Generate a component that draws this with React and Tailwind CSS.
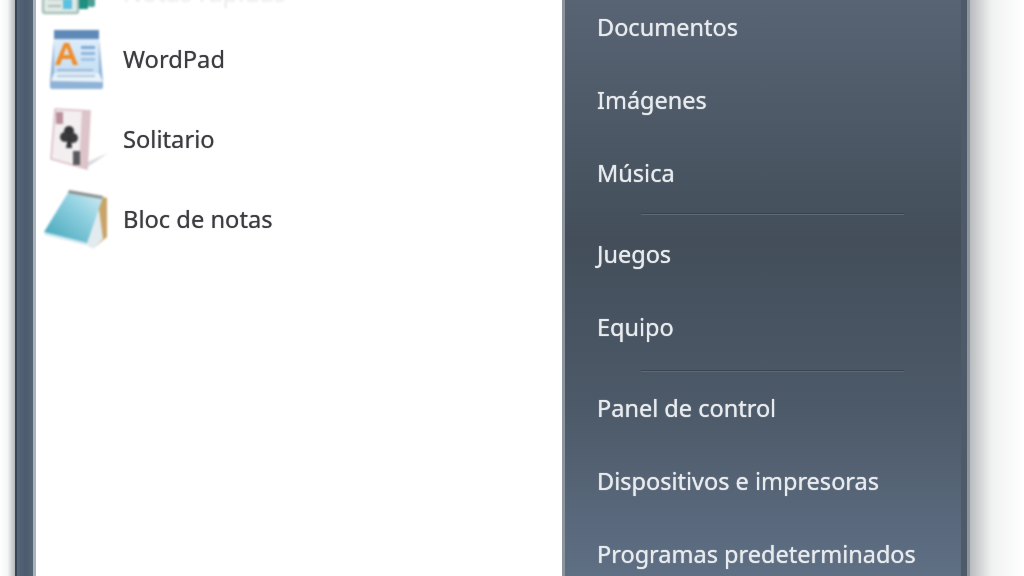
const FONT = "font-['Noto_Sans','Open_Sans',sans-serif]"

const places = [
  ['Documentos'], ['Imágenes'], ['Música'], 'sep',
  ['Juegos'], ['Equipo'], 'sep2',
  ['Panel de control'], ['Dispositivos e impresoras'], ['Programas predeterminados'],
]

function StickyIcon() {
  return (
    <svg width="64" height="60" viewBox="0 0 64 60" className="blur-[0.8px]">
      <rect x="5" y="2" width="35" height="50" rx="2" fill="#dfeae6" stroke="#a9bfb8" strokeWidth="2.5" />
      <rect x="10" y="30" width="15" height="10" fill="#cfd8d6" />
      <rect x="25" y="38" width="9" height="10" fill="#5cc0e0" />
      <rect x="10" y="44" width="13" height="2" fill="#aebbb8" />
      <rect x="41" y="20" width="9" height="28" fill="#1f8f80" />
      <rect x="50" y="22" width="7" height="24" rx="2" fill="#4d9f96" />
    </svg>
  )
}

function WordPadIcon() {
  return (
    <svg width="56" height="62" viewBox="0 0 56 62" className="blur-[0.9px]">
      <defs>
        <linearGradient id="wp" x1="0" y1="0" x2="0" y2="1">
          <stop offset="0" stopColor="#e3f0fb" />
          <stop offset="1" stopColor="#c2dcf3" />
        </linearGradient>
      </defs>
      <path d="M1 52 L5 10 H50 L54 52 V58 Q54 60 52 60 H3 Q1 60 1 58 Z" fill="#8fb3d6" />
      <rect x="5" y="1" width="45" height="50" fill="url(#wp)" />
      <path d="M2 52 L5 44 H50 L54 53 Z" fill="#e8f2fa" />
      <rect x="5" y="1" width="45" height="9" fill="#5f8ab8" />
      <rect x="32" y="17" width="14" height="3" fill="#7ea9d6" />
      <rect x="32" y="23" width="14" height="3" fill="#8fb6de" />
      <rect x="32" y="29" width="14" height="3" fill="#a3c4e6" />
      <rect x="8" y="40" width="36" height="2" fill="#9fb9d2" />
      <rect x="8" y="46" width="38" height="2" fill="#b4c8da" />
      <path d="M6 36 L15 14 H20 L29 36 H24 L22 30 H13 L11 36 Z M14.500 26 H20.500 L17.500 18 Z" fill="#f08c28" fillRule="evenodd" />
    </svg>
  )
}

function SolitarioIcon() {
  return (
    <svg width="62" height="66" viewBox="0 0 62 66" className="blur-[1px]">
      <path d="M40 55 L60 46 L38 61 Z" fill="#d5d8dc" />
      <path d="M3 52 L7 2 L42 4 L39 62 Z" fill="#f3eef0" stroke="#d9b9c0" strokeWidth="1.500" />
      <path d="M34 4 L42 4 L39 62 L31 60 Z" fill="#dcc4cb" />
      <rect x="8" y="5" width="7" height="12" fill="#b98f9a" />
      <rect x="25" y="44" width="7" height="14" fill="#5a5a5e" />
      <circle cx="21" cy="24" r="5" fill="#343436" />
      <circle cx="17" cy="30" r="5" fill="#3a3a3c" />
      <circle cx="25" cy="31" r="5" fill="#3a3a3c" />
      <path d="M20 30 L23 30 L24 41 L18 41 Z" fill="#343436" />
    </svg>
  )
}

function NotasIcon() {
  return (
    <svg width="66" height="62" viewBox="0 0 66 62" className="blur-[1px]">
      <defs>
        <linearGradient id="bn" x1="0" y1="1" x2="1" y2="0">
          <stop offset="0" stopColor="#3fa3b8" />
          <stop offset="0.6" stopColor="#8fd0e0" />
          <stop offset="1" stopColor="#d4eef4" />
        </linearGradient>
      </defs>
      <path d="M56 7 L64 9 L64 48 L52 58 Z" fill="#c9a468" />
      <path d="M40 54 L56 20 L60 50 L50 60 Z" fill="#e2ebef" />
      <path d="M1 43 L26 2 L60 8 L44 54 Z" fill="url(#bn)" />
      <path d="M26 1 L60 7 L59 10 L25 4 Z" fill="#8c8f8f" />
      <path d="M1 43 L44 54 L43 56 L2 46 Z" fill="#cfe6ec" />
    </svg>
  )
}

function Program({ icon, label, iconClass }) {
  return (
    <div className="flex h-[80px] items-center">
      <div className={`flex w-[87px] shrink-0 ${iconClass}`}>{icon}</div>
      <span className={`text-[23.700px] leading-none text-[#3c3c40] blur-[0.6px] [text-shadow:0_0_1px_#77777c] ${FONT}`}>{label}</span>
    </div>
  )
}

export default function App() {
  return (
    <div className="flex h-[576px] w-[1024px] overflow-hidden bg-white">
      <div className="w-[15px] shrink-0 bg-gradient-to-r from-white via-[#f4f5f5] to-[#b4b8bb]" />
      <div className="flex w-[21px] shrink-0 bg-[#4f5e70]">
        <div className="w-[2px] bg-[#394553]" />
        <div className="flex-1 bg-gradient-to-r from-[#56677c] via-[#4c5b6d] to-[#566474]" />
        <div className="w-[3px] bg-[#a9b3bb]" />
      </div>

      <div className="w-[526px] shrink-0 overflow-hidden">
        <div className="-mt-[60px] flex h-[80px] items-center">
          <div className="mt-[22px] ml-[2px] w-[85px] shrink-0"><StickyIcon /></div>
          <span className={`mt-[24px] text-[25px] leading-none text-[#3c3c40] opacity-10 blur-[1px] ${FONT}`}>Notas rápidas</span>
        </div>
        <Program icon={<WordPadIcon />} label="WordPad" iconClass="pl-[13px]" />
        <Program icon={<SolitarioIcon />} label="Solitario" iconClass="pl-[12px]" />
        <Program icon={<NotasIcon />} label="Bloc de notas" iconClass="pl-[7px]" />
      </div>

      <div className="flex w-[408px] shrink-0 bg-[linear-gradient(to_bottom,#586474_0%,#434e5a_42%,#4c5968_70%,#5f6f84_100%)]">
        <div className="w-[3px] bg-[#8b949c]" />
        <div className="-mt-[9px] flex-1 pl-[32px]">
          {places.map((item, i) =>
            item === 'sep' || item === 'sep2' ? (
              <div key={i} className={`flex h-[8px] pl-[44px] ${item === 'sep' ? 'items-center' : 'items-end'}`}>
                <div className="h-[2px] w-[263px] border-t border-b border-t-[#3a4450] border-b-[#5d6a79]" />
              </div>
            ) : (
              <div key={i} className={`flex h-[73px] items-center text-[23.500px] leading-none text-[#e8ebee] blur-[0.6px] [text-shadow:0_0_1px_#dfe3e8] ${FONT}`}>
                {item[0]}
              </div>
            )
          )}
        </div>
        <div className="w-[6px] bg-[#4f5a68]" />
        <div className="w-[3px] bg-[#8d949b]" />
      </div>

      <div className="flex-1 bg-gradient-to-r from-[#b9bcbf] via-[#f0f1f1] via-40% to-white" />
    </div>
  )
}
